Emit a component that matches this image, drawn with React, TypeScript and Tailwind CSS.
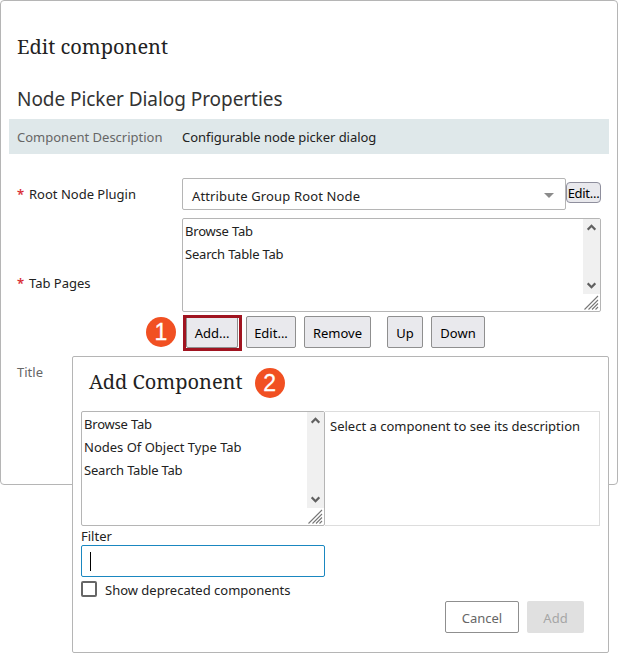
import { useState } from "react";
import clsx from "clsx";

const tabPages = ["Browse Tab", "Search Table Tab"];
const components = ["Browse Tab", "Nodes Of Object Type Tab", "Search Table Tab"];

function ScrollRail() {
  return (
    <div className="flex w-[17px] shrink-0 flex-col">
      <div className="flex flex-1 flex-col items-center justify-between bg-[#f0f0f0] py-[5px]">
        <svg width="9" height="7" viewBox="0 0 9 7" fill="none" stroke="#606060" strokeWidth="2.2">
          <path d="M0.7 5.6 4.5 1.8 8.3 5.6" />
        </svg>
        <svg width="9" height="7" viewBox="0 0 9 7" fill="none" stroke="#606060" strokeWidth="2.2">
          <path d="M0.7 1.4 4.5 5.2 8.3 1.4" />
        </svg>
      </div>
      <svg width="17" height="17" viewBox="0 0 17 17" fill="none" stroke="#777" strokeWidth="1.1">
        <path d="M1.5 15.5 15 2M5.5 15.5 15 6M9 15.5 15 9.5M12.5 15.5 15 13" />
      </svg>
    </div>
  );
}

function ListBox({ items, className }: { items: string[]; className?: string }) {
  const [selected, setSelected] = useState<string | null>(null);

  return (
    <div className={clsx("flex rounded-[2px] border border-[#b5b5b5] bg-white", className)}>
      <ul className="flex-1 pt-px pl-[2px]">
        {items.map((item) => (
          <li
            key={item}
            onClick={() => setSelected(item)}
            className={clsx(
              "h-[23px] leading-[23px]",
              item.length < 20 && "tracking-[-0.2px]",
              selected === item && "bg-[#dfe8ea]"
            )}
          >
            {item}
          </li>
        ))}
      </ul>
      <ScrollRail />
    </div>
  );
}

function ToolButton({ label, className }: { label: string; className?: string }) {
  return (
    <button
      className={clsx(
        "h-8 rounded-[2px] border border-[#8f8f8f] bg-[#e9e9ed] pt-[3px] text-black",
        className
      )}
    >
      {label}
    </button>
  );
}

function StepBadge({ step, className }: { step: number; className?: string }) {
  return (
    <span
      className={clsx(
        "flex size-[30px] items-center justify-center rounded-full bg-[#f15022] font-['Liberation_Sans',sans-serif] text-[23px] leading-none text-white [-webkit-text-stroke:0.3px_white]",
        className
      )}
    >
      {step}
    </span>
  );
}

function Required() {
  return <span className="w-3 text-[#d8232a] [-webkit-text-stroke:0.2px_#d8232a]">*</span>;
}

export default function App() {
  const [filter, setFilter] = useState("");
  const [deprecated, setDeprecated] = useState(false);

  return (
    <div className="relative h-[653px] w-[618px] overflow-hidden bg-white font-['Noto_Sans',sans-serif] text-[13px] text-[#222]">
      {/* Edit component */}
      <div className="h-[485px] rounded-[4px] border border-[#b5b5b5] px-2 pt-[31px]">
        <h1 className="pl-2 font-['Noto_Serif','DejaVu_Serif',serif] text-[20px] leading-[30px]">
          Edit component
        </h1>
        <h2 className="mt-[22px] pl-2 text-[19px] leading-[30px] tracking-[-0.06px] text-[#333]">
          Node Picker Dialog Properties
        </h2>

        <div className="mt-[5px] flex h-[35px] items-center bg-[#dfe8ea] pt-[2px] pl-2">
          <span className="w-[165px] text-[#666]">Component Description</span>
          <span className="tracking-[-0.04px]">Configurable node picker dialog</span>
        </div>

        <div className="mt-6 flex pl-2">
          <div className="flex h-8 w-[165px] items-center pt-[2px]">
            <Required />
            Root Node Plugin
          </div>
          <div className="flex h-8 w-[384px] items-center justify-between rounded-[2px] border border-[#b5b5b5] pr-[11px] pl-[9px]">
            <span className="pt-[5px] tracking-[0.14px]">Attribute Group Root Node</span>
            <svg className="mt-[2px]" width="10" height="5" viewBox="0 0 10 5" fill="#8b8b8b">
              <path d="M0 0h10L5 5z" />
            </svg>
          </div>
          <button className="mt-1 h-[21px] w-[35px] rounded-[4px] border border-[#8f8f9d] bg-[#e9e9ed] pt-px leading-none tracking-[-0.3px] text-black">
            Edit...
          </button>
        </div>

        <div className="mt-2 flex pl-2">
          <div className="flex w-[165px] pt-14">
            <Required />
            Tab Pages
          </div>
          <div>
            <ListBox items={tabPages} className="h-[94px] w-[419px]" />
            <div className="mt-[3px] flex items-start">
              <div className="ml-px flex h-9 w-[59px] overflow-hidden border-3 border-[#a01420]">
                <ToolButton label="Add..." className="-mt-[2px] w-[52px]" />
              </div>
              <ToolButton label="Edit..." className="mt-px ml-1 w-[50px]" />
              <ToolButton label="Remove" className="mt-px ml-2 w-[67px]" />
              <ToolButton label="Up" className="mt-px ml-4 w-9" />
              <ToolButton label="Down" className="mt-px ml-2 w-[54px]" />
            </div>
          </div>
        </div>

        <div className="mt-[12px] pl-2 text-[#666]">Title</div>
      </div>

      <StepBadge step={1} className="absolute top-[317px] left-[146px]" />

      {/* Add Component */}
      <div className="absolute top-[356px] left-[72px] h-[297px] w-[537px] rounded-[2px] border border-[#b5b5b5] bg-white px-2">
        <div className="flex h-[54px] pl-2">
          <h1 className="pt-[10px] font-['Noto_Serif','DejaVu_Serif',serif] text-[20px] leading-[30px]">
            Add Component
          </h1>
          <StepBadge step={2} className="mt-[11px] ml-3" />
        </div>

        <div className="flex h-[115px]">
          <ListBox items={components} className="w-[244px]" />
          <div className="flex-1 border border-l-0 border-[#ddd] pt-[5px] pl-[5px]">
            Select a component to see its description
          </div>
        </div>

        <div className="h-[19px] leading-[21px]">Filter</div>
        <div className="flex h-8 w-[244px] items-center rounded-[2px] border border-[#1a87c0] pl-2">
          {!filter && <span className="h-[19px] w-px bg-black" />}
          <input
            value={filter}
            onChange={(e) => setFilter(e.target.value)}
            className="h-full flex-1 outline-none"
          />
        </div>
        <label className="mt-1 flex h-[17px] items-start">
          <input
            type="checkbox"
            checked={deprecated}
            onChange={(e) => setDeprecated(e.target.checked)}
            className="mr-2 size-4 appearance-none rounded-[2px] border-2 border-[#666] checked:bg-[#666]"
          />
          <span className="leading-[19px]">Show deprecated components</span>
        </label>

        <div className="mt-[3px] flex justify-end gap-2 pr-4">
          <button className="h-8 w-[74px] rounded-[2px] border border-[#8f8f8f] pt-[3px] text-[#666]">
            Cancel
          </button>
          <button disabled className="h-8 w-[57px] rounded-[2px] bg-[#e0e0e0] pt-[3px] text-[#a6a6a6]">
            Add
          </button>
        </div>
      </div>
    </div>
  );
}
